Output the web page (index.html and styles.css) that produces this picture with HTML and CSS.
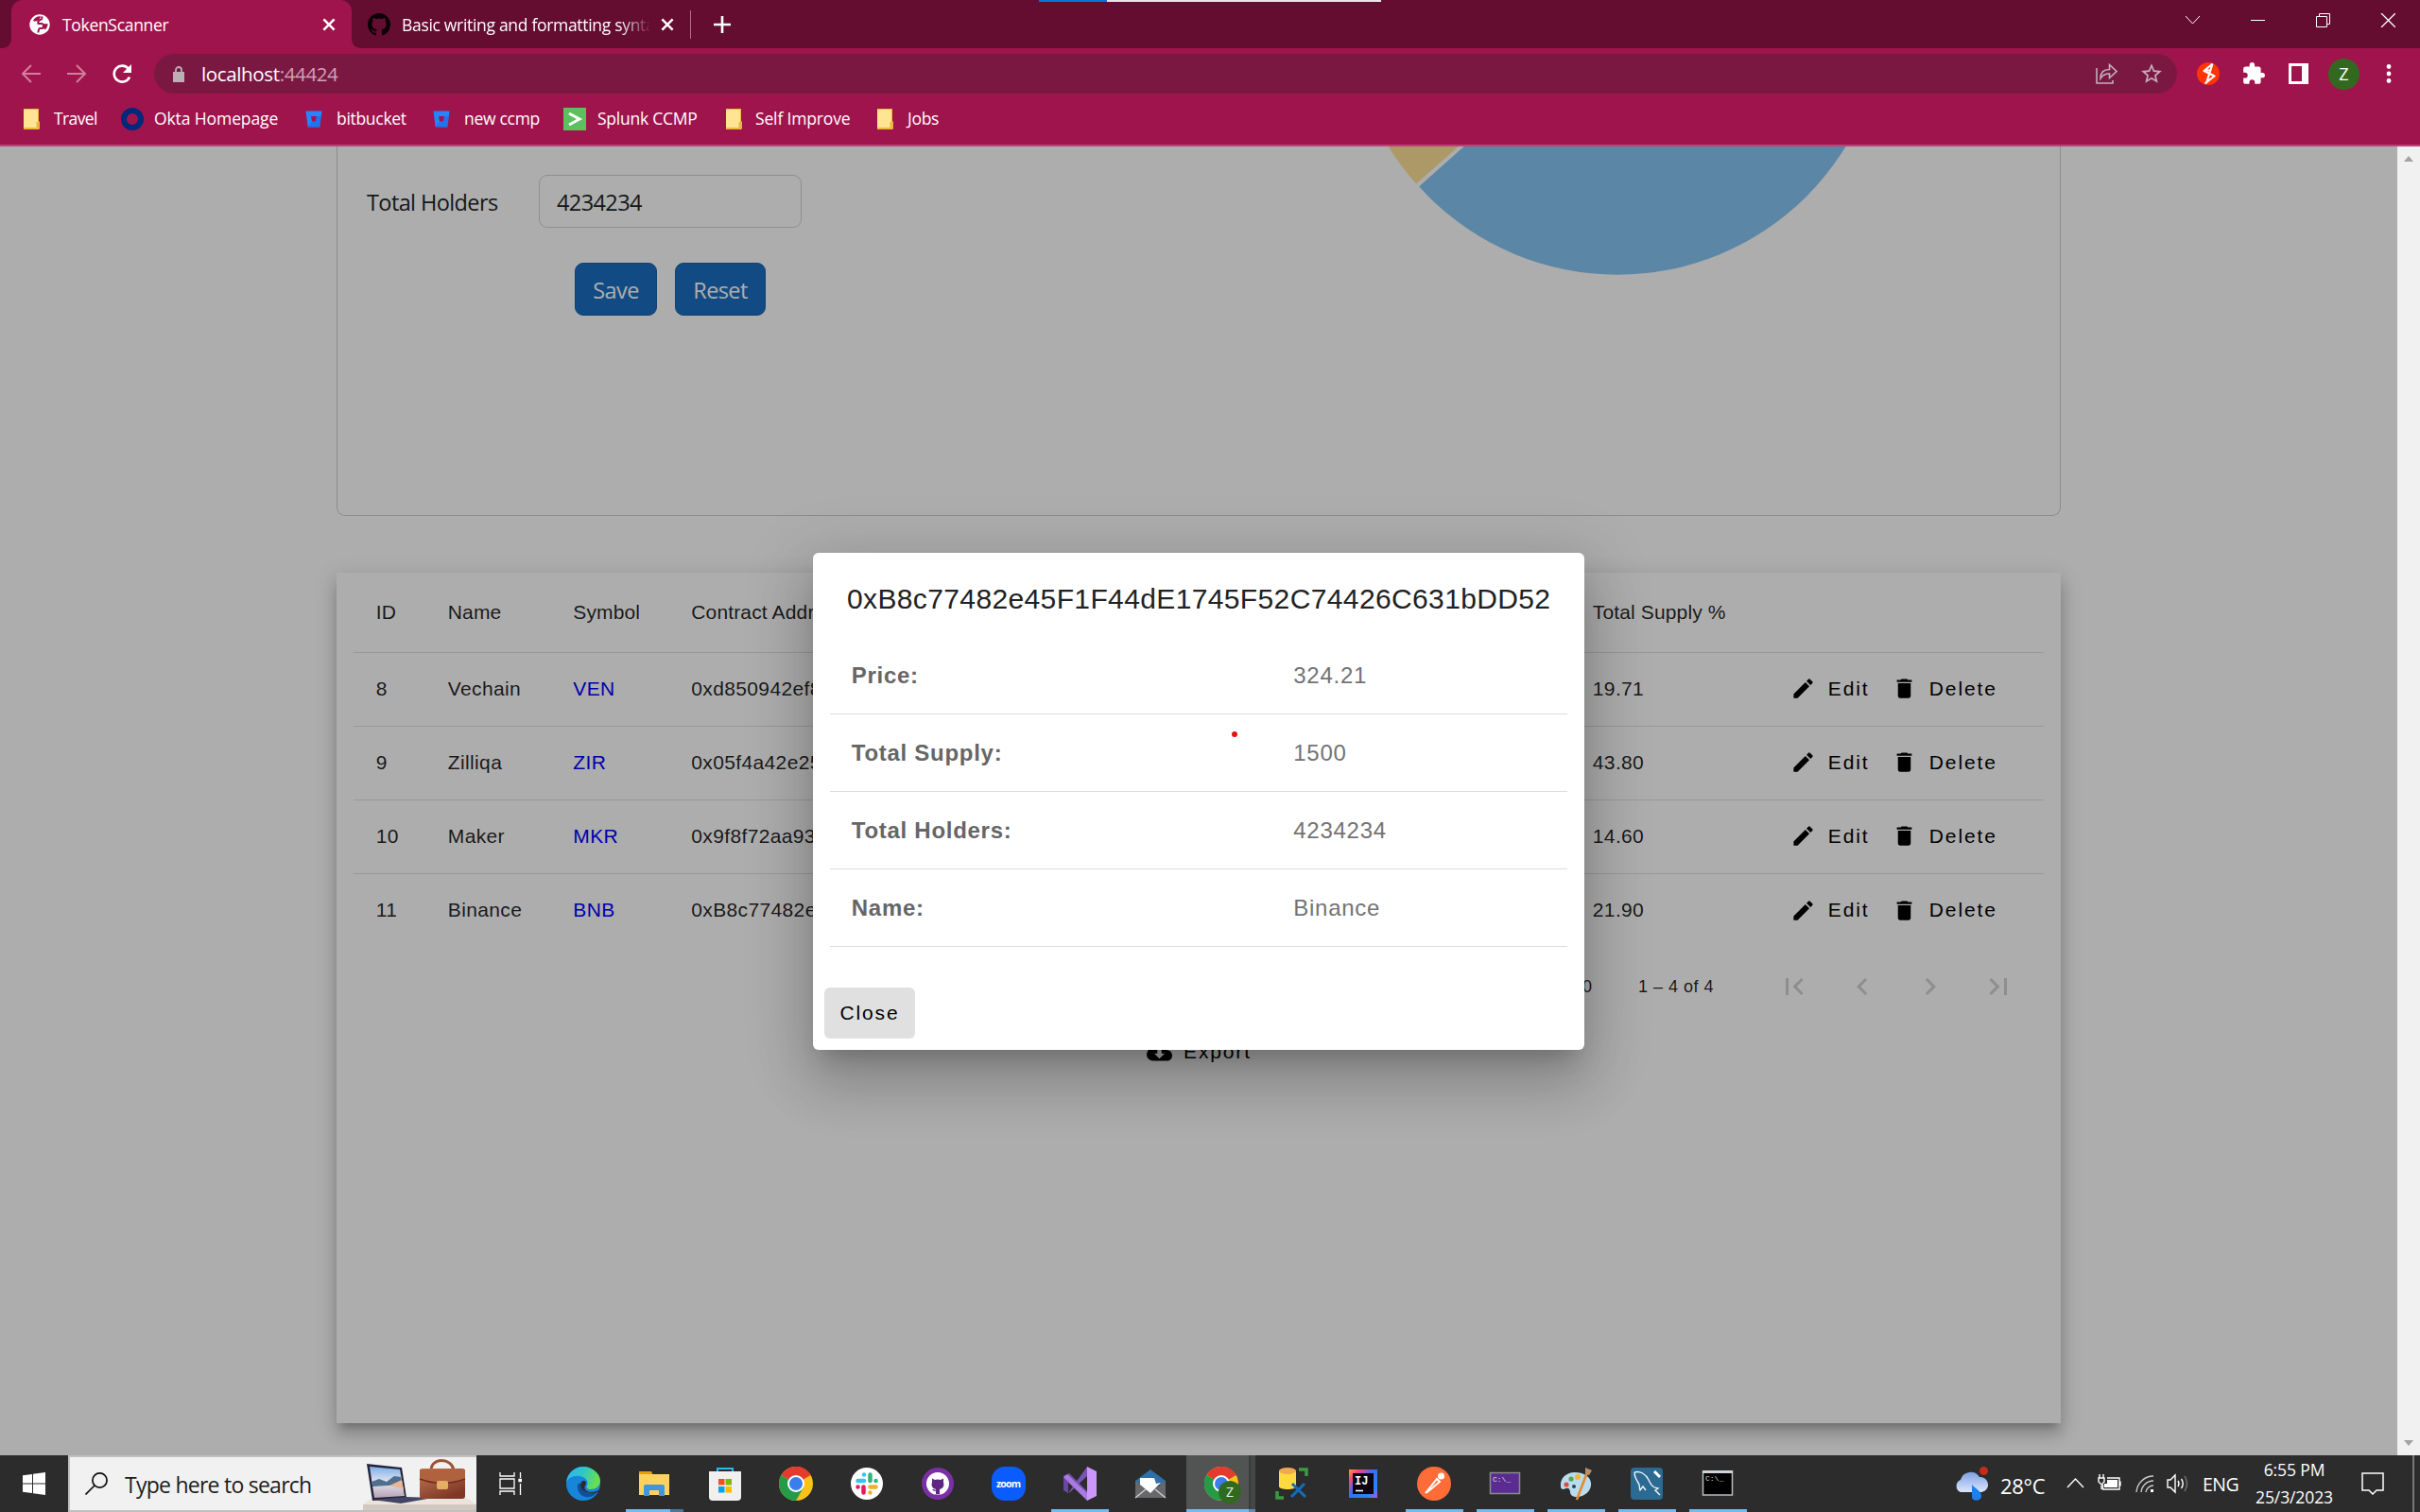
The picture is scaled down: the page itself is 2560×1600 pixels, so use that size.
FILE: index.html
```html
<!DOCTYPE html>
<html lang="en">
<head>
<meta charset="utf-8">
<title>TokenScanner</title>
<link rel="stylesheet" href="styles.css">
</head>
<body>
<svg class="defs" width="0" height="0">
  <symbol id="i-edit" viewBox="0 0 24 24"><path d="M3 17.25V21h3.75L17.81 9.94l-3.75-3.75L3 17.25zM20.71 7.04a1 1 0 0 0 0-1.41l-2.34-2.34a1 1 0 0 0-1.41 0l-1.83 1.83 3.75 3.75 1.83-1.83z"/></symbol>
  <symbol id="i-delete" viewBox="0 0 24 24"><path d="M6 19c0 1.1.9 2 2 2h8c1.1 0 2-.9 2-2V7H6v12zM19 4h-3.5l-1-1h-5l-1 1H5v2h14V4z"/></symbol>
  <symbol id="i-x" viewBox="0 0 16 16"><path d="M3 3l10 10M13 3L3 13" stroke="currentColor" stroke-width="2.2"/></symbol>
  <symbol id="i-folder" viewBox="0 0 18 22"><path d="M1 0h16v13l1 1v7l-1 1H1z" fill="#e9b93a"/><path d="M1 1h15v13h-1.500v6H1z" fill="#ffe591"/></symbol>
  <symbol id="i-bucket" viewBox="0 0 18 18"><path d="M.5.500h17L15.300 17.500H2.700z" fill="#2684ff"/><path d="M6 6h6l-1 5.500H7z" fill="#a0144d"/><path d="M12 6h5l-1.700 11.500H2.700L7 11.500h4z" fill="#1a66e0" opacity=".55"/></symbol>
  <symbol id="i-chrome" viewBox="0 0 36 36"><circle cx="18" cy="18" r="18" fill="#fbc116"/><path d="M18 18L2.400 9A18 18 0 0 1 33.600 9z" fill="#e33b2e"/><path d="M18 18L2.400 9A18 18 0 0 0 18 36L25.800 22.500z" fill="#259b48"/><path d="M18 9h15.600A18 18 0 0 0 18 0z" fill="#e33b2e"/><circle cx="18" cy="18" r="9" fill="#fff"/><circle cx="18" cy="18" r="7" fill="#3b7ded"/></symbol>
  <symbol id="i-cat" viewBox="0 0 16 16"><path d="M8 0C3.580 0 0 3.580 0 8c0 3.540 2.290 6.530 5.470 7.590.4.070.55-.17.55-.38 0-.19-.01-.82-.01-1.490-2.010.37-2.530-.49-2.690-.94-.09-.23-.48-.94-.82-1.130-.28-.15-.68-.52-.01-.53.63-.01 1.080.58 1.230.82.72 1.210 1.870.87 2.330.66.07-.52.28-.87.51-1.070-1.780-.2-3.640-.89-3.640-3.950 0-.87.31-1.590.82-2.150-.08-.2-.36-1.020.08-2.120 0 0 .67-.21 2.200.82.64-.18 1.320-.27 2-.27s1.360.09 2 .27c1.530-1.040 2.200-.82 2.200-.82.44 1.100.16 1.920.08 2.120.51.56.82 1.270.82 2.150 0 3.070-1.870 3.750-3.650 3.950.29.25.54.73.54 1.480 0 1.070-.01 1.930-.01 2.200 0 .21.15.46.55.38A8.010 8.010 0 0 0 16 8c0-4.420-3.580-8-8-8z"/></symbol>
</svg>

<header class="tabstrip">
  <div class="loading"><i></i></div>
  <div class="tab active">
    <svg class="globe" viewBox="0 0 22 22"><circle cx="11" cy="11" r="10.700" fill="#fff"/><path d="M13 2.500q1.500 2.500-1.500 3.500T9.500 10H13q2.500.5 2 3t-3 2-2.500 4.500" fill="none" stroke="#a0144d" stroke-width="2"/><path d="M12.500 2.500Q7 1.500 4 7q3 1.500 6-1zM14 10.500l5.500-.5q0 4-3 6.500l-1.500-2z" fill="#a0144d"/></svg>
    <span class="ttl">TokenScanner</span>
    <svg class="tx"><use href="#i-x"/></svg>
  </div>
  <div class="tab second">
    <svg class="gh"><use href="#i-cat"/></svg>
    <span class="ttl2">Basic writing and formatting syntax</span>
    <svg class="tx"><use href="#i-x"/></svg>
  </div>
  <div class="tabsep"></div>
  <svg class="plus" viewBox="0 0 18 18"><path d="M9 0v18M0 9h18" stroke="#fff" stroke-width="2.600"/></svg>
  <svg class="winbtns" viewBox="0 0 222 15" fill="none" stroke="#fff"><path d="M0 3l7.500 8L15 3"/><path d="M69 7.500h15"/><path d="M138.500 3.500h11v11h-11zM141.500 3.500v-3h11v11h-3"/><path d="M207 0l15 15M222 0l-15 15" stroke-width="1.300"/></svg>
</header>

<div class="toolbar">
  <svg class="nav" viewBox="0 0 120 24" fill="none"><g stroke="#cf7fa1" stroke-width="2"><path d="M20 12H1M10 3l-9 9 9 9M48 12h19M58 3l9 9-9 9"/></g><path d="M113 7A8.500 8.500 0 1 0 114 15.500" stroke="#fff" stroke-width="2.600"/><path d="M116 2v9h-9z" fill="#fff"/></svg>
  <div class="omnibox">
    <svg class="lock" viewBox="0 0 12 17"><path d="M0 6h12v11H0z" fill="#b9afb5"/><path d="M3 7V4a3 3 0 0 1 6 0v3" fill="none" stroke="#b9afb5" stroke-width="1.800"/></svg>
    <span class="url">localhost<b>:44424</b></span>
    <svg class="share" viewBox="0 0 23 22" fill="none" stroke="#c3aeb9" stroke-width="1.600"><path d="M1 5v16h17v-3"/><path d="M5 16c0-7 4-9.500 9.500-9.500V1.500L22 8.500l-7.500 7v-4.500C10 11 7.500 12 5 16z"/></svg>
    <svg class="star" viewBox="0 0 24 24"><path d="M22 9.240l-7.190-.62L12 2 9.190 8.630 2 9.240l5.460 4.730L5.820 21 12 17.270 18.180 21l-1.630-7.030L22 9.240zM12 15.400l-3.760 2.270 1-4.280-3.320-2.880 4.380-.38L12 6.100l1.710 4.040 4.380.38-3.320 2.880 1 4.280L12 15.400z" fill="#c3aeb9"/></svg>
  </div>
  <svg class="ext" viewBox="0 0 24 24"><circle cx="12" cy="12" r="12" fill="#ff3407"/><path d="M16.500 1.500L7.500 9l11 5.500L8.500 22.500M16.500 1.500L10 22M7.500 9l8-1" fill="none" stroke="#fff" stroke-width="2.200" stroke-linejoin="round"/></svg>
  <svg class="puzzle" viewBox="0 0 24 24"><path d="M20.500 11H19V7c0-1.100-.9-2-2-2h-4V3.500a2.500 2.500 0 0 0-5 0V5H4c-1.100 0-2 .9-2 2v3.800h1.500a2.700 2.700 0 0 1 0 5.400H2V20c0 1.100.9 2 2 2h3.800v-1.500a2.700 2.700 0 0 1 5.400 0V22H17c1.100 0 2-.9 2-2v-4h1.500a2.500 2.500 0 0 0 0-5z" fill="#fff"/></svg>
  <svg class="panel" viewBox="0 0 21 22"><path d="M0 0h21v22H0z" fill="#fff"/><path d="M3 3h11v16H3z" fill="#a0144d"/></svg>
  <div class="avatar">Z</div>
  <svg class="dots" viewBox="0 0 6 20" fill="#fff"><circle cx="3" cy="2.500" r="2.400"/><circle cx="3" cy="10" r="2.400"/><circle cx="3" cy="17.500" r="2.400"/></svg>
</div>

<nav class="bookmarks">
  <a class="bm b1"><svg class="fold"><use href="#i-folder"/></svg><span>Travel</span></a>
  <a class="bm b2"><svg viewBox="0 0 24 24" width="24" height="24"><circle cx="12" cy="12" r="9" fill="none" stroke="#00297a" stroke-width="6"/></svg><span>Okta Homepage</span></a>
  <a class="bm b3"><svg width="18" height="18"><use href="#i-bucket"/></svg><span>bitbucket</span></a>
  <a class="bm b4"><svg width="18" height="18"><use href="#i-bucket"/></svg><span>new ccmp</span></a>
  <a class="bm b5"><svg viewBox="0 0 24 24" width="24" height="24"><path d="M0 0h24v24H0z" fill="#5cc05c"/><path d="M6 6l11 6-11 6" fill="none" stroke="#fff" stroke-width="3"/></svg><span>Splunk CCMP</span></a>
  <a class="bm b6"><svg class="fold"><use href="#i-folder"/></svg><span>Self Improve</span></a>
  <a class="bm b7"><svg class="fold"><use href="#i-folder"/></svg><span>Jobs</span></a>
</nav>

<div class="viewport">
  <main class="page">
    <section class="formcard">
      <div class="form">
        <div class="field"><label>Total Holders</label><div class="input">4234234</div></div>
        <div class="buttons"><div class="btn save">Save</div><div class="btn reset">Reset</div></div>
      </div>
      <svg class="pie" viewBox="0 0 566 136"><circle cx="283" cy="-147" r="282.700" fill="#87c6f3"/><path d="M283-147L72 42-40 42-40-147z" fill="#fff"/><path d="M283-147L71.500 41A282.700 282.700 0 0 1 20-40z" fill="#ffe298"/><path d="M283-147L66 46" stroke="#fff" stroke-width="4"/></svg>
    </section>
    <section class="tablecard">
      <div class="row head"><span>ID</span><span>Name</span><span>Symbol</span><span>Contract Address</span><span>Total Supply %</span></div>
      <div class="row"><span>8</span><span>Vechain</span><a>VEN</a><span>0xd850942ef8811f2a866692a623011bde52a462c1</span><span>19.71</span><div class="acts"><svg><use href="#i-edit"/></svg><em>Edit</em><svg><use href="#i-delete"/></svg><em>Delete</em></div></div>
      <div class="row"><span>9</span><span>Zilliqa</span><a>ZIR</a><span>0x05f4a42e251f2d52b8ed15e9fedaacfcef1fad27</span><span>43.80</span><div class="acts"><svg><use href="#i-edit"/></svg><em>Edit</em><svg><use href="#i-delete"/></svg><em>Delete</em></div></div>
      <div class="row"><span>10</span><span>Maker</span><a>MKR</a><span>0x9f8f72aa9304c8b593d555f12ef6589cc3a579a2</span><span>14.60</span><div class="acts"><svg><use href="#i-edit"/></svg><em>Edit</em><svg><use href="#i-delete"/></svg><em>Delete</em></div></div>
      <div class="row last"><span>11</span><span>Binance</span><a>BNB</a><span>0xB8c77482e45F1F44dE1745F52C74426C631bDD52</span><span>21.90</span><div class="acts"><svg><use href="#i-edit"/></svg><em>Edit</em><svg><use href="#i-delete"/></svg><em>Delete</em></div></div>
      <div class="paginator"><span class="size">10</span><span class="range">1 – 4 of 4</span>
        <svg viewBox="0 0 24 24"><path d="M18.410 16.590L13.820 12l4.590-4.590L17 6l-6 6 6 6zM6 6h2v12H6z"/></svg>
        <svg viewBox="0 0 24 24"><path d="M15.410 7.410L14 6l-6 6 6 6 1.410-1.410L10.830 12z"/></svg>
        <svg viewBox="0 0 24 24"><path d="M10 6L8.590 7.410 13.170 12l-4.580 4.590L10 18l6-6z"/></svg>
        <svg viewBox="0 0 24 24"><path d="M5.590 7.410L10.180 12l-4.590 4.590L7 18l6-6-6-6zM16 6h2v12h-2z"/></svg>
      </div>
      <div class="export"><svg viewBox="0 0 24 24"><path d="M19.350 10.040A7.490 7.490 0 0 0 12 4C9.110 4 6.600 5.640 5.350 8.040A5.994 5.994 0 0 0 0 14c0 3.310 2.690 6 6 6h13c2.760 0 5-2.240 5-5 0-2.640-2.050-4.780-4.650-4.960zM17 13l-5 5-5-5h3V9h4v4h3z"/></svg><em>Export</em></div>
    </section>
  </main>
  <div class="scrollbar"><i class="up"></i><i class="down"></i></div>
  <div class="backdrop">
    <div class="dialog">
      <h2>0xB8c77482e45F1F44dE1745F52C74426C631bDD52</h2>
      <dl>
        <div><dt>Price:</dt><dd>324.21</dd></div>
        <div><dt>Total Supply:</dt><dd>1500</dd></div>
        <div><dt>Total Holders:</dt><dd>4234234</dd></div>
        <div><dt>Name:</dt><dd>Binance</dd></div>
      </dl>
      <div class="close">Close</div>
      <i class="reddot"></i>
    </div>
  </div>
</div>

<footer class="taskbar">
  <div class="start"><svg viewBox="0 0 24 24" width="24" height="24" fill="#fff"><path d="M0 3.300L10 2v9.500H0zM11 1.800L24 0v11.500H11zM0 12.500h10V22L0 20.700zM11 12.500h13V24l-13-1.800z"/></svg></div>
  <div class="search">
    <svg class="mag" viewBox="0 0 24 24" fill="none" stroke="#111" stroke-width="1.700"><circle cx="15.500" cy="8.500" r="7.600"/><path d="M10 14L.5 23.500"/></svg>
    <span class="hint">Type here to search</span>
    <svg class="art" viewBox="0 0 120 56"><defs><linearGradient id="sky" x2="0" y2="1"><stop stop-color="#7db0ea"/><stop offset=".5" stop-color="#e6e4f0"/><stop offset="1" stop-color="#b5a3b6"/></linearGradient><linearGradient id="bag" x2=".6" y2="1"><stop stop-color="#c67a55"/><stop offset="1" stop-color="#7e3626"/></linearGradient></defs>
      <path d="M10 43h100l10 7H0z" fill="#ebe4dc"/><path d="M0 50h120v8H0z" fill="#d2c8bf"/>
      <path d="M4 7l37 4 5 32-36 3z" fill="#24243a"/><path d="M7 10l32 3 5 28-32 2z" fill="url(#sky)"/><path d="M9 26l8-3 8 3 8-6 7 1 2 8-32 2z" fill="#4f6f8c"/><path d="M28 30l13-6 2 10z" fill="#e8b894"/>
      <path d="M10 45l36-3 28 1-34 6z" fill="#434664"/>
      <path d="M72 14c0-14 22-14 24 0" fill="none" stroke="#9c5336" stroke-width="3"/><rect x="60" y="12" width="48" height="32" rx="3" fill="url(#bag)"/><path d="M60 13h48v10q-24 9-48 0z" fill="#b0623f"/><path d="M60 23q24 9 48 0" fill="none" stroke="#6d2d20" stroke-width="1.500"/><rect x="78" y="25" width="12" height="9" rx="2" fill="#e3b061"/></svg>
  </div>
  <div class="app tv"><svg viewBox="0 0 24 24" width="24" height="24" fill="none" stroke="#fff" stroke-width="1.300"><path d="M1 0v4h15V0M1 24v-4h15v4M1 7h15v10H1zM22.500 0v6M22.500 12v12"/><path d="M21 7.500h3v2h-3z" fill="#fff"/></svg></div>
  <div class="app"><svg viewBox="0 0 36 36"><defs><linearGradient id="eg" x2="1" y2=".3"><stop stop-color="#31b5ee"/><stop offset=".5" stop-color="#2cc5cf"/><stop offset="1" stop-color="#67e04f"/></linearGradient></defs><circle cx="18" cy="18" r="18" fill="#1686da"/><path d="M0 17C1 7 9 0 18 0s18 7 18 15c0 6-5 9-10 9-4 0-5-2-4-4 2-4-1-9-8-10C7 9 2 12 0 17z" fill="url(#eg)"/><path d="M12 19c-1 9 5 14 13 13 4-.5 6-3 8-6-7 4-19 2-18-9z" fill="#124f98"/><path d="M20 20c-2 4 2 7 6 7 5 0 8-2 10-3l-2 3c-8 2-18 1-19-7 0-3 2-5 3-5 3 0 4 2 2 5z" fill="#2b2c2b"/></svg></div>
  <div class="app run multi"><svg viewBox="0 0 36 36"><path d="M2 5h13l2 4h16v6H2z" fill="#e3a008"/><path d="M2 8h32v22H2z" fill="#ffd25e"/><path d="M7 31V21q0-2 2-2h18q2 0 2 2v10h-6v-6H13v6z" fill="#3e96dc"/></svg></div>
  <div class="app"><svg viewBox="0 0 36 36"><path d="M10 7V2h16v5" fill="none" stroke="#28b9ee" stroke-width="2"/><path d="M1 5h34v27q0 4-4 4H5q-4 0-4-4z" fill="#f0f0f0"/><path d="M11 13h6.500v6.500H11z" fill="#f25022"/><path d="M18.500 13H25v6.500h-6.500z" fill="#7fba00"/><path d="M11 21h6.500v6.500H11z" fill="#00a4ef"/><path d="M18.500 21H25v6.500h-6.500z" fill="#ffb900"/></svg></div>
  <div class="app"><svg><use href="#i-chrome"/></svg></div>
  <div class="app"><svg viewBox="0 0 36 36"><circle cx="18" cy="18" r="17" fill="#fff"/><g stroke-width="4.500" stroke-linecap="round"><path d="M15 15H8.500M15 8.500v0" stroke="#36c5f0"/><path d="M21.500 8.500v6.500M27.500 15v0" stroke="#2eb67d"/><path d="M14.500 21.500v6M8.500 21.500v0" stroke="#e01e5a"/><path d="M21.500 21.500h6M21.500 27.500v0" stroke="#ecb22e"/></g></svg></div>
  <div class="app"><svg viewBox="0 0 36 36"><circle cx="18" cy="18" r="17" fill="#7b2fa5"/><circle cx="18" cy="18" r="11.500" fill="#fff"/><svg x="6" y="6" width="24" height="24" fill="#fff"><use href="#i-cat"/></svg><path d="M12 12.500l3 1.500q3-1 6 0l3-1.500v4q2 6-4 7.500v5h-4v-3q-3 0-4-2h1.500l2.500 1v-1q-6-1.500-4-7.500z" fill="#5f2585"/></svg></div>
  <div class="app"><svg viewBox="0 0 36 36"><rect width="36" height="36" rx="14" fill="#0b5cff"/><text x="18" y="21.500" text-anchor="middle" font-size="10.500" font-weight="700" fill="#fff" font-family="Open Sans, sans-serif" textLength="26">zoom</text></svg></div>
  <div class="app run"><svg viewBox="0 0 36 36"><path d="M1 10l6-3 20 20V36L3 14v8z" fill="#7250a8"/><path d="M1 10l5-2v20l-5-3z" fill="#6a47a0"/><path d="M6 28L26 0v10L8 27z" fill="#7a53b5"/><path d="M5 8l21 20v8L1 11z" fill="#a97be0"/><path d="M26 0l10 5v26l-10 5z" fill="#cb97fb"/></svg></div>
  <div class="app"><svg viewBox="0 0 36 36"><path d="M2 15L18 3l16 12v4H2z" fill="#2f6fa5"/><path d="M2 15l16 12 16-12v18H2z" fill="#68686b"/><path d="M7 12h15l2 6 5-1-11 11L7 19z" fill="#fff"/><path d="M2 33l11-9M34 33l-11-9" stroke="#ccc" stroke-width="1.500"/></svg></div>
  <div class="app run multi current"><svg viewBox="0 0 42 42" class="cz"><svg width="36" height="36"><use href="#i-chrome"/></svg><circle cx="27" cy="27" r="12" fill="#2f6a1f"/><text x="27" y="32" text-anchor="middle" font-size="14" fill="#e7efe5" font-family="Open Sans, sans-serif">Z</text></svg></div>
  <div class="app"><svg viewBox="0 0 36 36"><path d="M4 4v17c0 4 18 4 18 0V4z" fill="#ffd940"/><ellipse cx="13" cy="4.500" rx="9" ry="3.500" fill="#efa94e"/><path d="M25 3h8v7M2 26v7h7" fill="none" stroke="#3c9a45" stroke-width="3.500"/><path d="M18 18l14 14M31 18L17 32" stroke="#106ebe" stroke-width="3"/></svg></div>
  <div class="app"><svg viewBox="0 0 36 36"><defs><linearGradient id="ij" x2="1" y2="1"><stop stop-color="#fe9a3c"/><stop offset=".2" stop-color="#f8447c"/><stop offset=".45" stop-color="#3b6cf5"/><stop offset=".8" stop-color="#2387f5"/><stop offset="1" stop-color="#c04fe0"/></linearGradient></defs><path d="M3 3h30v30H3z" fill="url(#ij)"/><path d="M7 7h22v22H7z" fill="#0d0410"/><text x="9" y="18.500" font-size="12" font-weight="700" fill="#fff" font-family="Liberation Mono, monospace">IJ</text><path d="M10 25.500h8" stroke="#fff" stroke-width="1.600"/></svg></div>
  <div class="app run"><svg viewBox="0 0 36 36"><circle cx="18" cy="18" r="18" fill="#ff6c37"/><path d="M9 28l12-15 3 3L12 26z" fill="none" stroke="#fff" stroke-width="2"/><circle cx="25.500" cy="10" r="3.500" fill="#fff"/></svg></div>
  <div class="app run"><svg viewBox="0 0 36 36"><path d="M2.500 6.500h31v22h-31z" fill="#5a2c91" stroke="#8b8b90" stroke-width="1.500"/><text x="5" y="16" font-size="8" fill="#ddd" font-family="Liberation Mono, monospace">C:\_</text></svg></div>
  <div class="app run"><svg viewBox="0 0 36 36"><path d="M17 6C7 6 1 13 2 21c0 4 4 3 6 2s4 1 4 4 3 5 7 5c9 0 16-7 15-15-1-7-8-11-17-11z" fill="#b9dcef"/><circle cx="8" cy="19" r="2.600" fill="#e24a3b"/><circle cx="13" cy="13" r="2.600" fill="#57a84b"/><circle cx="20" cy="11" r="3" fill="#f0b735"/><circle cx="16" cy="21" r="2" fill="#2b4654"/><path d="M30 6L19 35" stroke="#e58b2d" stroke-width="2.600"/><path d="M28 1l7 3-3 5-4-1z" fill="#bb8e68"/></svg></div>
  <div class="app run"><svg viewBox="0 0 36 36"><rect x="1" y="1" width="34" height="34" rx="4" fill="#2b6a92"/><path d="M5 6c6-2 12 2 15 8s4 8 10 9l-3 2 5 5M5 6c0 5 2 8 4 11s1 6 2 8l3-4 3 4" fill="none" stroke="#eef4f8" stroke-width="1.400"/><path d="M26 5l6 6" stroke="#fff" stroke-width="3"/></svg></div>
  <div class="app run"><svg viewBox="0 0 36 36"><path d="M2.500 5h31v25h-31z" fill="#000" stroke="#b9bcc0" stroke-width="1.500"/><path d="M2 4h32v3H2z" fill="#cfd3d8"/><text x="5" y="14.500" font-size="8" fill="#ddd" font-family="Liberation Mono, monospace">C:\_</text></svg></div>
  <div class="tray">
    <svg class="weather" viewBox="0 0 36 36"><defs><linearGradient id="cl" x2="0" y2="1"><stop stop-color="#7f9fe6"/><stop offset="1" stop-color="#dbe6fb"/></linearGradient></defs><path d="M7 27a7 7 0 0 1 0-13 11 11 0 0 1 20-3 8 8 0 0 1 2 16z" fill="url(#cl)"/><path d="M19 19c3 4 11 7 10 13-1 5-10 5-10 0z" fill="#1d7ff0"/><circle cx="31.500" cy="4.500" r="4.500" fill="#c42b1c"/></svg>
    <span class="temp">28°C</span>
    <svg class="sys" viewBox="0 0 130 26" fill="none" stroke="#fff" stroke-width="1.400"><path d="M1 17l8.500-9 8.500 9"/><path d="M43 7h13v12H38.500v-5M57 10.500v5"/><path d="M43 9h11v8H40v-4h3z" fill="#fff" stroke="none"/><path d="M34 7h6v4l-3 3-3-3zM35 7V3M39 7V3M37 13v6"/><path d="M74 22A18 18 0 0 1 92 5M79 22a13 13 0 0 1 13-12M84 22a8 8 0 0 1 8-7" stroke="#ccc"/><path d="M89 19h3v3h-3z" fill="#fff" stroke="none"/><path d="M107 9h3l5-5v18l-5-5h-3z"/><path d="M118 10q2 3 0 6M121.500 8q3.500 5 0 10"/><path d="M125 5q5 8 0 16" stroke="#777"/></svg>
    <span class="eng">ENG</span>
    <div class="clock"><span>6:55 PM</span><span>25/3/2023</span></div>
    <svg class="note" viewBox="0 0 24 24" fill="none" stroke="#fff" stroke-width="1.500"><path d="M1 1h22v18h-7l-4 4-4-4H1z"/></svg>
    <i class="peek"></i>
  </div>
</footer>
</body>
</html>
```
FILE: styles.css
```css
* { box-sizing: border-box; }
body { margin: 0; width: 2560px; height: 1600px; overflow: hidden; display: flex; flex-direction: column; font-family: "Open Sans", "Noto Sans", sans-serif; color: #fff; }
svg { display: block; flex: none; }
.defs { position: absolute; }
span, em, a { white-space: nowrap; font-style: normal; }

/* browser chrome */
.tabstrip { height: 51px; flex: none; background: #640d31; display: flex; align-items: center; padding-left: 12px; position: relative; font-size: 17.500px; letter-spacing: -.31px; }
.loading { position: absolute; left: 1099px; top: 0; width: 362px; height: 2px; background: #e6e6e6; }
.loading i { display: block; width: 72px; height: 2px; background: #0078d7; }
.tab { height: 51px; display: flex; align-items: center; }
.active { width: 360px; background: #a0144d; border-radius: 12px 12px 0 0; padding-left: 19px; position: relative; }
.active::before, .active::after { content: ""; position: absolute; bottom: 0; width: 9px; height: 9px; }
.active::before { left: -9px; background: radial-gradient(circle at 0 0, transparent 8.5px, #a0144d 9px); }
.active::after { right: -9px; background: radial-gradient(circle at 100% 0, transparent 8.5px, #a0144d 9px); }
.globe { width: 22px; height: 22px; margin-right: 13px; }
.ttl { width: 273px; }
.tx { width: 18px; height: 18px; color: #fff; }
.second { padding-left: 17px; width: 358px; }
.gh { width: 24px; height: 24px; margin-right: 12px; fill: #0b0207; }
.ttl2 { width: 262px; margin-right: 10px; overflow: hidden; -webkit-mask-image: linear-gradient(90deg, #000 230px, transparent 264px); }
.tabsep { width: 1px; height: 30px; background: #a8718a; }
.plus { width: 18px; height: 18px; margin-left: 24px; }
.winbtns { width: 222px; height: 15px; margin-left: auto; margin-right: 26px; position: relative; top: -4px; }

.toolbar { height: 54px; flex: none; background: #a0144d; display: flex; align-items: center; padding-left: 23px; }
.nav { width: 120px; height: 24px; }
.omnibox { width: 2140px; height: 42px; border-radius: 21px; margin-left: 20px; background: #7b1842; display: flex; align-items: center; padding-left: 20px; font-size: 20.500px; letter-spacing: -.36px; }
.lock { width: 12px; height: 17px; margin-right: 18px; }
.url b { font-weight: 400; color: #d0a3b8; }
.share { width: 23px; height: 22px; margin-left: auto; }
.star { width: 26px; height: 26px; margin: 0 14px 0 23px; }
.ext { width: 24px; height: 24px; margin-left: 21px; }
.puzzle { width: 26px; height: 26px; margin-left: 23px; }
.panel { width: 21px; height: 22px; margin-left: 24px; }
.avatar { width: 33px; height: 33px; margin-left: 21px; border-radius: 50%; background: #33691e; text-align: center; font-size: 18px; line-height: 33px; }
.dots { width: 6px; height: 20px; margin-left: 28px; }

.bookmarks { height: 50px; flex: none; background: #a0144d; border-bottom: 2px solid #bb4377; display: flex; align-items: center; padding: 0 0 6px 24px; font-size: 17.500px; letter-spacing: -.3px; }
.bm { display: flex; align-items: center; }
.bm span { margin-top: -2px; }
.fold { width: 18px; height: 22px; }
.b1 { width: 104px; gap: 15px; letter-spacing: -.6px; }
.b2 { width: 195px; gap: 11px; letter-spacing: -.1px; }
.b3 { width: 135px; gap: 15px; }
.b4 { width: 138px; gap: 15px; }
.b5 { width: 171px; gap: 12px; letter-spacing: -.25px; }
.b6 { width: 160px; gap: 14px; letter-spacing: -.15px; }
.b7 { gap: 15px; }

/* page */
.viewport { height: 1385px; flex: none; position: relative; background: #fff; overflow: hidden; display: flex; color: #212529; }
.page { width: 2536px; padding-left: 356px; }
.formcard { width: 1824px; height: 391px; border: 1px solid #cfcfd1; border-top: 0; border-radius: 0 0 9px 9px; display: flex; }
.form { width: 1071px; padding: 30px 0 0 31px; font-size: 23.500px; letter-spacing: -.6px; }
.field { display: flex; align-items: center; }
.field label { width: 182px; padding-top: 1px; }
.input { width: 278px; height: 56px; border: 1px solid #ced4da; border-radius: 9px; padding: 1px 18px 0; display: flex; align-items: center; }
.buttons { display: flex; gap: 19px; margin: 37px 0 0 220px; }
.btn { height: 56px; border: 1px solid #1861ac; background: #1b6ec2; border-radius: 9px; color: #fff; display: flex; align-items: center; justify-content: center; padding-top: 1px; }
.save { width: 87px; }
.reset { width: 96px; }
.pie { width: 566px; height: 136px; }
.tablecard { width: 1824px; height: 900px; margin-top: 60px; padding: 0 18px; background: #fff; box-shadow: 0 7.5px 7.5px -4.5px rgba(0,0,0,.2), 0 12px 15px 1.5px rgba(0,0,0,.14), 0 4.5px 21px 3px rgba(0,0,0,.12); font-family: "Liberation Sans", Arial, sans-serif; font-size: 21px; letter-spacing: .36px; color: rgba(0,0,0,.87); }
.row { height: 78px; border-bottom: 1px solid #e0e0e0; display: grid; grid-template-columns: 76px 132.5px 125px 953.5px 209px 1fr; align-items: center; padding: 0 0 2px 23.800px; }
.row.head { height: 85px; letter-spacing: .14px; padding-bottom: 0; }
.row.last { border-bottom: 0; }
.row a { color: #00f; }
.acts { display: flex; align-items: center; color: #000; letter-spacing: 1.875px; }
.acts svg { width: 27px; height: 27px; }
.acts em { margin-left: 13px; width: 67px; }
.paginator { height: 82px; display: flex; align-items: center; font-size: 18px; letter-spacing: .5px; padding-left: 1290px; }
.paginator svg { width: 36px; height: 36px; margin-right: 36px; fill: #d1d1d1; }
.paginator svg:last-child { margin-right: 0; }
.size { width: 69px; flex: none; letter-spacing: 0; }
.range { width: 147px; flex: none; }
.export { display: flex; align-items: center; color: #000; letter-spacing: 1.875px; padding-left: 839px; margin-top: 14px; height: 28px; }
.export svg { width: 27px; height: 27px; margin-right: 12px; }
.scrollbar { width: 24px; height: 1385px; background: #f1f1f1; position: relative; z-index: 2; display: flex; flex-direction: column; justify-content: space-between; align-items: center; padding: 10px 0; }
.up, .down { border: 5.500px solid transparent; border-top-width: 0; border-bottom: 6px solid #a3a3a3; }
.down { transform: rotate(180deg); }
.backdrop { position: absolute; inset: 0 24px 0 0; background: rgba(0,0,0,.32); padding: 430px 0 0 860px; }

.dialog { position: relative; width: 816px; height: 526px; background: #fff; border-radius: 6px; font-family: "Liberation Sans", Arial, sans-serif; box-shadow: 0 16.5px 22.5px -10.5px rgba(0,0,0,.2), 0 36px 57px 4.500px rgba(0,0,0,.14), 0 13.500px 69px 12px rgba(0,0,0,.12); padding: 0 12px; }
.dialog h2 { margin: 0; height: 89px; padding: 8px 0 0 24px; line-height: 81px; font-size: 30px; font-weight: 400; letter-spacing: .37px; color: #212121; }
.dialog dl { margin: 0 6px; font-size: 24px; letter-spacing: .72px; color: #666; }
.dialog dl div { height: 82px; border-bottom: 1px solid #dcdcdc; display: grid; grid-template-columns: 467.500px 1fr; align-items: center; padding-left: 22.800px; }
.dialog dt { font-weight: 700; }
.dialog dd { margin: 0; color: #737373; }
.close { width: 96px; height: 54px; margin-top: 43px; border-radius: 6px; background: #e0e0e0; color: #000; display: flex; align-items: center; justify-content: center; font-size: 21px; letter-spacing: 1.875px; }
.reddot { position: absolute; left: 443px; top: 189px; width: 6px; height: 6px; border-radius: 50%; background: #e81010; }

/* taskbar */
.taskbar { height: 60px; flex: none; background: #2b2c2b; display: flex; }
.start { width: 72px; display: flex; align-items: center; justify-content: center; }
.search { width: 432px; background: #f1f1f1; border: 2px solid #c0c0c0; border-right-width: 0; display: flex; align-items: center; padding-left: 16px; color: #1d1d1d; font-size: 23px; letter-spacing: -.75px; }
.mag { width: 24px; height: 24px; }
.hint { width: 270px; padding: 2px 0 0 18px; }
.art { width: 120px; height: 56px; }
.app { width: 75px; display: flex; align-items: center; justify-content: center; position: relative; }
.app > svg { width: 36px; height: 36px; }
.app.tv > svg { width: 24px; height: 24px; margin-right: 3px; }
.run::after { content: ""; position: absolute; left: 8px; right: 6px; bottom: 0; height: 3px; background: #76b9ed; }
.multi::after { background: linear-gradient(90deg, #76b9ed 47px, #4d7596 47px); }
.current { background: linear-gradient(90deg, transparent 1px, #525353 1px 67px, #3b3c3b 67px 69px, #454646 69px 74px, transparent 74px); }
.current::after { left: 1px; right: 1px; background: linear-gradient(90deg, #76b9ed 66px, #5d8bb1 66px); }
.app > .cz { width: 42px; height: 42px; margin: 6px 0 0 6px; }
.tray { display: flex; align-items: center; margin-left: auto; width: 493px; }
.weather { width: 36px; height: 36px; }
.temp { font-size: 22px; letter-spacing: -.3px; margin-left: 13px; width: 70px; padding-top: 3px; }
.sys { width: 130px; height: 26px; }
.eng { font-size: 19.500px; letter-spacing: -.5px; margin-left: 14px; width: 47px; }
.clock { width: 100px; display: flex; flex-direction: column; align-items: center; font-size: 17.500px; line-height: 29px; letter-spacing: -.1px; }
.note { width: 24px; height: 24px; margin-left: 21px; }
.peek { width: 2px; height: 60px; background: #777; margin-left: 30px; }
```
